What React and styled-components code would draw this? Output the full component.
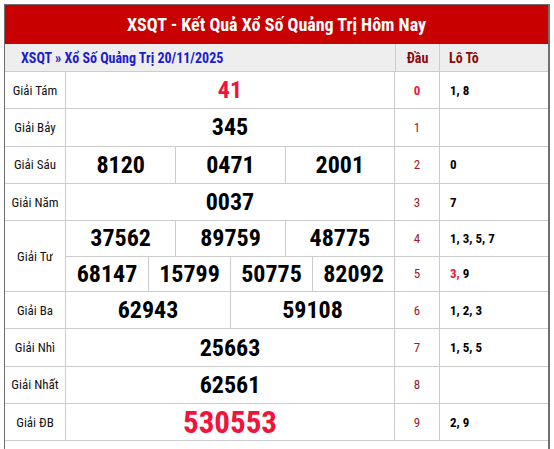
import React from "react";
import styled, { createGlobalStyle } from "styled-components";

const Global = createGlobalStyle`
  html, body { margin: 0; padding: 0; background: #fff; }
  body { font-family: "Roboto Condensed", Roboto, "Liberation Sans", sans-serif; }
`;

const Wrapper = styled.div`
  margin: 4px 4px 0 4px;
  width: 546px;
  box-sizing: border-box;
  border-top: 1px solid #6f6f6f;
  border-left: 1px solid #6f6f6f;
  border-right: 2px solid #6f6f6f;
  padding-bottom: 30px;
  background: #fff;
`;

const Title = styled.h1`
  margin: 0;
  height: 39px;
  background: #c80000;
  color: #fff;
  font-family: Roboto, sans-serif;
  font-stretch: 75%;
  font-weight: 700;
  font-size: 18px;
  display: flex;
  align-items: center;
  justify-content: center;
`;

const SubHeader = styled.div`
  display: grid;
  grid-template-columns: 391px 44px 1fr;
  height: 28px;
  background: #eeeeee;
  border-bottom: 1px solid #cccccc;
  box-sizing: border-box;
  font-family: Roboto, sans-serif;
  font-stretch: 75%;
  font-weight: 700;
  font-size: 14px;
`;

const SubCell = styled.div`
  display: flex;
  align-items: center;
  justify-content: ${(p) => (p.$center ? "center" : "flex-start")};
  padding-left: ${(p) => p.$pad || 0}px;
  color: ${(p) => p.$color};
  border-right: ${(p) => (p.$last ? "none" : "1px solid #cccccc")};
`;

const Table = styled.div`
  display: grid;
  grid-template-columns: 61px 329px 45px 1fr;
  grid-template-rows: repeat(4, 37.3px) 35.5px 35.5px repeat(4, 37.3px);
  font-family: Roboto, sans-serif;
  font-stretch: 75%;
`;

const Cell = styled.div`
  box-sizing: border-box;
  border-bottom: 1px solid #cccccc;
  border-right: ${(p) => (p.$last ? "none" : "1px solid #cccccc")};
  display: flex;
  align-items: center;
`;

const Label = styled(Cell)`
  grid-row: span ${(p) => p.$span || 1};
  justify-content: center;
  font-size: 13px;
  color: #111;
`;

const NumberRow = styled(Cell)`
  display: grid;
  grid-template-columns: repeat(${(p) => p.$count}, 1fr);
  align-items: stretch;
`;

const NumberCell = styled.div`
  display: flex;
  align-items: center;
  justify-content: center;
  font-weight: 700;
  font-size: ${(p) => (p.$big ? 31 : 24)}px;
  color: ${(p) => (p.$red ? "#f0143c" : "#000")};
  border-left: ${(p) => (p.$first ? "none" : "1px solid #cccccc")};
`;

const Head = styled(Cell)`
  justify-content: center;
  font-size: 13px;
  color: ${(p) => (p.$hot ? "#f0143c" : "#9b1a2a")};
  font-weight: ${(p) => (p.$hot ? 700 : 400)};
`;

const Loto = styled(Cell)`
  padding-left: 10px;
  font-size: 13px;
  font-weight: 700;
  color: #000;
`;

const LotoText = styled.span`
  white-space: pre;
`;

const Hot = styled.span`
  color: #f0143c;
`;

const prizes = [
  { label: "Giải Tám", rows: [["41"]], red: true },
  { label: "Giải Bảy", rows: [["345"]] },
  { label: "Giải Sáu", rows: [["8120", "0471", "2001"]] },
  { label: "Giải Năm", rows: [["0037"]] },
  {
    label: "Giải Tư",
    rows: [
      ["37562", "89759", "48775"],
      ["68147", "15799", "50775", "82092"],
    ],
  },
  { label: "Giải Ba", rows: [["62943", "59108"]] },
  { label: "Giải Nhì", rows: [["25663"]] },
  { label: "Giải Nhất", rows: [["62561"]] },
  { label: "Giải ĐB", rows: [["530553"]], red: true, big: true },
];

const loto = [
  { head: "0", hot: true, values: ["1", "8"] },
  { head: "1", values: [] },
  { head: "2", values: ["0"] },
  { head: "3", values: ["7"] },
  { head: "4", values: ["1", "3", "5", "7"] },
  { head: "5", values: ["3", "9"], hotIndex: 0 },
  { head: "6", values: ["1", "2", "3"] },
  { head: "7", values: ["1", "5", "5"] },
  { head: "8", values: [] },
  { head: "9", values: ["2", "9"] },
];

function LotoValues({ item }) {
  return (
    <LotoText>
      {item.values.map((v, i) => {
        const last = i === item.values.length - 1;
        const main = last ? v : `${v},`;
        const gap = last ? "" : " ";
        return i === item.hotIndex ? (
          <React.Fragment key={i}>
            <Hot>{main}</Hot>
            {gap}
          </React.Fragment>
        ) : (
          <React.Fragment key={i}>
            {main}
            {gap}
          </React.Fragment>
        );
      })}
    </LotoText>
  );
}

export default function App() {
  let lineIndex = 0;
  const cells = [];
  prizes.forEach((p, pi) => {
    cells.push(
      <Label key={`l${pi}`} $span={p.rows.length}>
        {p.label}
      </Label>
    );
    p.rows.forEach((row, ri) => {
      const item = loto[lineIndex];
      cells.push(
        <NumberRow key={`n${pi}-${ri}`} $count={row.length}>
          {row.map((n, ni) => (
            <NumberCell key={ni} $first={ni === 0} $red={p.red} $big={p.big}>
              {n}
            </NumberCell>
          ))}
        </NumberRow>
      );
      cells.push(
        <Head key={`h${lineIndex}`} $hot={item.hot}>
          {item.head}
        </Head>
      );
      cells.push(
        <Loto key={`t${lineIndex}`} $last>
          <LotoValues item={item} />
        </Loto>
      );
      lineIndex += 1;
    });
  });

  return (
    <>
      <Global />
      <Wrapper>
        <Title>XSQT - Kết Quả Xổ Số Quảng Trị Hôm Nay</Title>
        <SubHeader>
          <SubCell $pad={16} $color="#1c1ccf">
            XSQT » Xổ Số Quảng Trị 20/11/2025
          </SubCell>
          <SubCell $center $color="#8b0a0a">
            Đầu
          </SubCell>
          <SubCell $pad={9} $color="#8b0a0a" $last>
            Lô Tô
          </SubCell>
        </SubHeader>
        <Table>{cells}</Table>
      </Wrapper>
    </>
  );
}
